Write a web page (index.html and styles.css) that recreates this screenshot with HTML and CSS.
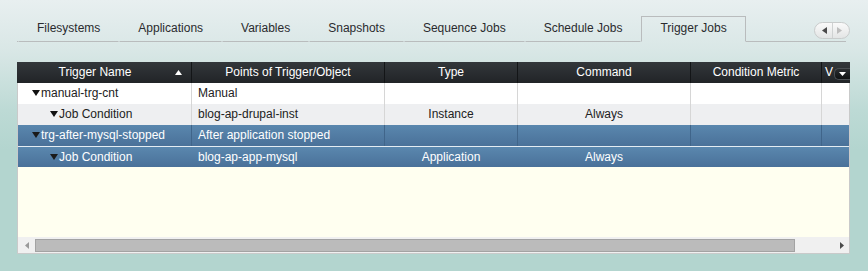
FILE: index.html
```html
<!DOCTYPE html>
<html>
<head>
<meta charset="utf-8">
<link rel="stylesheet" href="styles.css">
</head>
<body>
<div class="tabs">
  <div class="lead"></div>
  <div class="tab">Filesystems</div>
  <div class="tab">Applications</div>
  <div class="tab">Variables</div>
  <div class="tab">Snapshots</div>
  <div class="tab">Sequence Jobs</div>
  <div class="tab">Schedule Jobs</div>
  <div class="tab active">Trigger Jobs</div>
  <div class="fill">
    <div class="pill">
      <span class="pbtn"><svg width="5" height="7" viewBox="0 0 5 7"><path d="M5 0V7L0 3.5Z" fill="#4a4a4a"/></svg></span>
      <span class="pbtn right"><svg width="5" height="7" viewBox="0 0 5 7"><path d="M0 0V7L5 3.5Z" fill="#bdbdbd"/></svg></span>
    </div>
  </div>
</div>

<div class="panel">
  <div class="head">
    <div class="hc first">Trigger Name<span class="sort"><svg width="7" height="5" viewBox="0 0 7 5"><path d="M0 5H7L3.5 0Z" fill="#fff"/></svg></span></div>
    <div class="hc">Points of Trigger/Object</div>
    <div class="hc">Type</div>
    <div class="hc">Command</div>
    <div class="hc">Condition Metric</div>
    <div class="hc last"><span class="vtext">V</span><span class="menu"><svg width="7" height="4" viewBox="0 0 7 4"><path d="M0 0H7L3.5 4Z" fill="#fff"/></svg></span></div>
  </div>
  <div class="body">
    <div class="row">
      <div class="c lvl1"><svg class="tri" width="8" height="6" viewBox="0 0 8 6"><path d="M0 0H8L4 6Z"/></svg>manual-trg-cnt</div>
      <div class="c">Manual</div>
      <div class="c ctr"></div>
      <div class="c ctr"></div>
      <div class="c"></div>
      <div class="c"></div>
    </div>
    <div class="row alt">
      <div class="c lvl2"><svg class="tri" width="8" height="6" viewBox="0 0 8 6"><path d="M0 0H8L4 6Z"/></svg>Job Condition</div>
      <div class="c">blog-ap-drupal-inst</div>
      <div class="c ctr">Instance</div>
      <div class="c ctr">Always</div>
      <div class="c"></div>
      <div class="c"></div>
    </div>
    <div class="row sel">
      <div class="c lvl1"><svg class="tri" width="8" height="6" viewBox="0 0 8 6"><path d="M0 0H8L4 6Z"/></svg>trg-after-mysql-stopped</div>
      <div class="c">After application stopped</div>
      <div class="c ctr"></div>
      <div class="c ctr"></div>
      <div class="c"></div>
      <div class="c"></div>
    </div>
    <div class="row sel focus">
      <div class="c lvl2"><svg class="tri" width="8" height="6" viewBox="0 0 8 6"><path d="M0 0H8L4 6Z"/></svg>Job Condition</div>
      <div class="c">blog-ap-app-mysql</div>
      <div class="c ctr">Application</div>
      <div class="c ctr">Always</div>
      <div class="c"></div>
      <div class="c"></div>
    </div>
    <div class="empty"></div>
    <div class="hscroll">
      <span class="arrow"><svg width="4" height="7" viewBox="0 0 4 7"><path d="M4 0V7L0 3.5Z" fill="#9a9a9a"/></svg></span>
      <div class="thumb"></div>
      <span class="arrow end"><svg width="4" height="7" viewBox="0 0 4 7"><path d="M0 0V7L4 3.5Z" fill="#4a4a4a"/></svg></span>
    </div>
  </div>
</div>
</body>
</html>
```

FILE: styles.css
```css
html, body {
  margin: 0;
  padding: 0;
}
body {
  width: 868px;
  height: 271px;
  overflow: hidden;
  font-family: "Liberation Sans", Arial, sans-serif;
  font-size: 12px;
  color: #222;
  background: linear-gradient(to bottom, #e8eff0 0px, #d9e7e6 50px, #bddad5 110px, #b3d5cf 150px, #b3d5cf 271px);
}

/* tab strip */
.tabs {
  display: flex;
  align-items: flex-end;
  margin-left: 17px;
  width: 829px;
  height: 42px;
}
.lead {
  width: 1px;
  border-bottom: 1px solid #b9bcbd;
}
.tab {
  padding: 0 18px 2px;
  line-height: 22px;
  border: 1px solid transparent;
  border-bottom-color: #b9bcbd;
  color: #2a2a2e;
  white-space: nowrap;
}
.tab.active {
  border-color: #b9bcbd;
  border-bottom-color: transparent;
}
.fill {
  flex: 1;
  display: flex;
  justify-content: flex-end;
  border-bottom: 1px solid #b9bcbd;
}
.pill {
  display: flex;
  width: 34px;
  height: 15px;
  margin: 0 -4px 2px 0;
  border: 1px solid #c9cccc;
  border-radius: 9px;
  background: linear-gradient(to bottom, #fafafa, #e3e5e5);
}
.pbtn {
  flex: 1;
  display: flex;
  align-items: center;
  justify-content: center;
  padding-left: 2px;
}
.pbtn.right {
  border-left: 1px solid #cfd2d2;
  padding-left: 0;
  padding-right: 2px;
}

/* grid panel */
.panel {
  margin: 20px 0 0 17px;
  width: 833px;
}
.head {
  display: grid;
  grid-template-columns: 175px 193px 133px 173px 131px 28px;
  height: 21px;
  background: linear-gradient(to bottom, #33373b, #212427);
  color: #fff;
}
.hc {
  position: relative;
  line-height: 21px;
  text-align: center;
  border-right: 1px solid #131517;
  white-space: nowrap;
  overflow: hidden;
}
.hc.first {
  padding-right: 18px;
}
.hc.last {
  border-right: none;
  text-align: left;
  padding-left: 3px;
}
.sort {
  position: absolute;
  right: 9px;
  top: 8px;
  line-height: 0;
}
.menu {
  position: absolute;
  right: 0;
  top: 6px;
  width: 15px;
  height: 10px;
  border-radius: 5px 0 0 5px;
  background: linear-gradient(to bottom, #2a2d30, #101213);
  border: 1px solid #4a4e52;
  border-right: none;
  display: flex;
  align-items: center;
  justify-content: center;
}

.body {
  border: 1px solid #c9caca;
  border-top: none;
  background: #fffff0;
}
.row {
  display: grid;
  grid-template-columns: 174px 193px 133px 173px 131px 27px;
  height: 21px;
  background: #fff;
}
.row.alt {
  background: #eeeff1;
}
.row.sel {
  background: linear-gradient(to bottom, #5a87ae, #4a7199);
  color: #fff;
}
.row.focus {
  height: 20px;
  border-top: 1px solid #e4ecf2;
}
.c {
  line-height: 21px;
  padding-left: 6px;
  border-right: 1px solid #d6d6d6;
  white-space: nowrap;
  overflow: hidden;
}
.row .c:last-child {
  border-right: none;
}
.row.sel .c {
  border-right-color: #40658a;
}
.row.focus .c {
  border-right-color: transparent;
  line-height: 20px;
}
.c.ctr {
  text-align: center;
  padding-left: 0;
}
.c.lvl1 {
  padding-left: 14px;
}
.c.lvl2 {
  padding-left: 32px;
}
.tri {
  margin-right: 1px;
  vertical-align: 1px;
  fill: #111;
}
.row.sel .tri {
  fill: #1a1a1a;
}

.empty {
  height: 70px;
}
.hscroll {
  display: flex;
  align-items: center;
  height: 16px;
  background: #f0f0f0;
}
.arrow {
  width: 17px;
  display: flex;
  justify-content: center;
  line-height: 0;
}
.arrow.end {
  margin-left: auto;
  width: 30px;
  justify-content: flex-end;
  padding-right: 5px;
  box-sizing: border-box;
}
.thumb {
  width: 758px;
  height: 11px;
  background: #bbbbbb;
  border: 1px solid #a3a3a3;
}
```
